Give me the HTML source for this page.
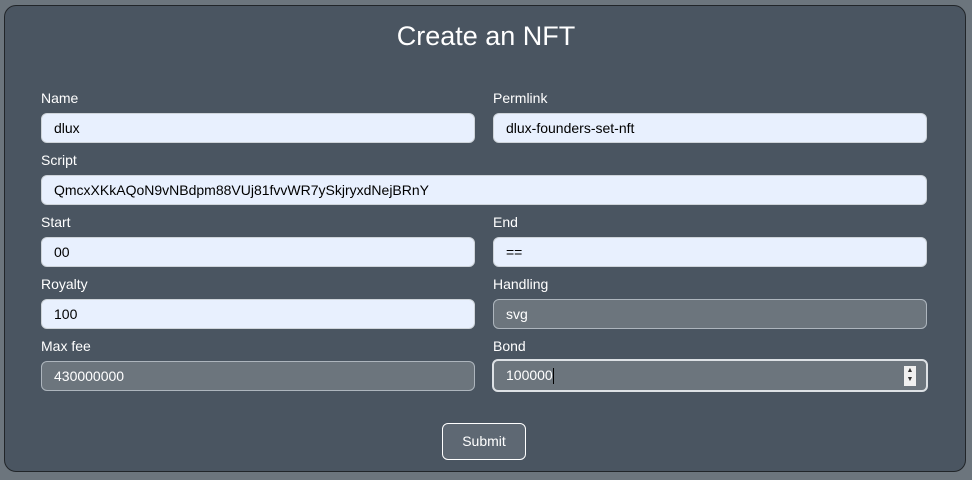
<!DOCTYPE html>
<html><head><style>
body{margin:0;width:972px;height:480px;background:#6c757d;font-family:"Liberation Sans","DejaVu Sans",sans-serif;overflow:hidden;position:relative}
.card{position:absolute;left:4px;top:5px;width:962px;height:467px;background:#4a5561;border:1px solid #212529;border-radius:12px;box-sizing:border-box}
h1{position:absolute;left:0;right:0;top:21px;margin:0;text-align:center;color:#fff;font-weight:normal;font-size:27px}
.l{position:absolute;color:#fff;font-size:14px}
.i{position:absolute;width:434px;height:30px;box-sizing:border-box;border-radius:6px;background:#e8f0fe;border:1px solid #ced4da;color:#000;font-size:14px;padding-left:12px;line-height:28px}
.d{background:#6c757d;color:#fff;border-color:#adb5bd}
.btn{position:absolute;left:442px;top:423px;width:84px;height:37px;box-sizing:border-box;border:1px solid #fff;border-radius:6px;background:#5e6873;color:#fff;font-size:14px;text-align:center;line-height:35px}
</style></head><body>
<div class="card"></div>
<h1>Create an NFT</h1>
<div class="l" style="left:41px;top:90px">Name</div>
<div class="l" style="left:493px;top:90px">Permlink</div>
<div class="i" style="left:41px;top:113px">dlux</div>
<div class="i" style="left:493px;top:113px">dlux-founders-set-nft</div>
<div class="l" style="left:41px;top:152px">Script</div>
<div class="i" style="left:41px;top:175px;width:886px">QmcxXKkAQoN9vNBdpm88VUj81fvvWR7ySkjryxdNejBRnY</div>
<div class="l" style="left:41px;top:214px">Start</div>
<div class="l" style="left:493px;top:214px">End</div>
<div class="i" style="left:41px;top:237px">00</div>
<div class="i" style="left:493px;top:237px">==</div>
<div class="l" style="left:41px;top:276px">Royalty</div>
<div class="l" style="left:493px;top:276px">Handling</div>
<div class="i" style="left:41px;top:299px">100</div>
<div class="i d" style="left:493px;top:299px">svg</div>
<div class="l" style="left:41px;top:338px">Max fee</div>
<div class="l" style="left:493px;top:338px">Bond</div>
<div class="i d" style="left:41px;top:361px">430000000</div>
<div class="i d" style="left:492px;top:359px;width:436px;height:33px;border:2px solid #dde1e5;line-height:29px;padding-left:12px">100000<span style="display:inline-block;width:1px;height:16px;background:#000;vertical-align:middle"></span>
<div style="position:absolute;right:10px;top:5px;width:12px;height:20px;background:#f0f0f0;font-size:7px;line-height:9px;color:#333;text-align:center">▲<br>▼</div></div>
<div class="btn">Submit</div>
</body></html>
